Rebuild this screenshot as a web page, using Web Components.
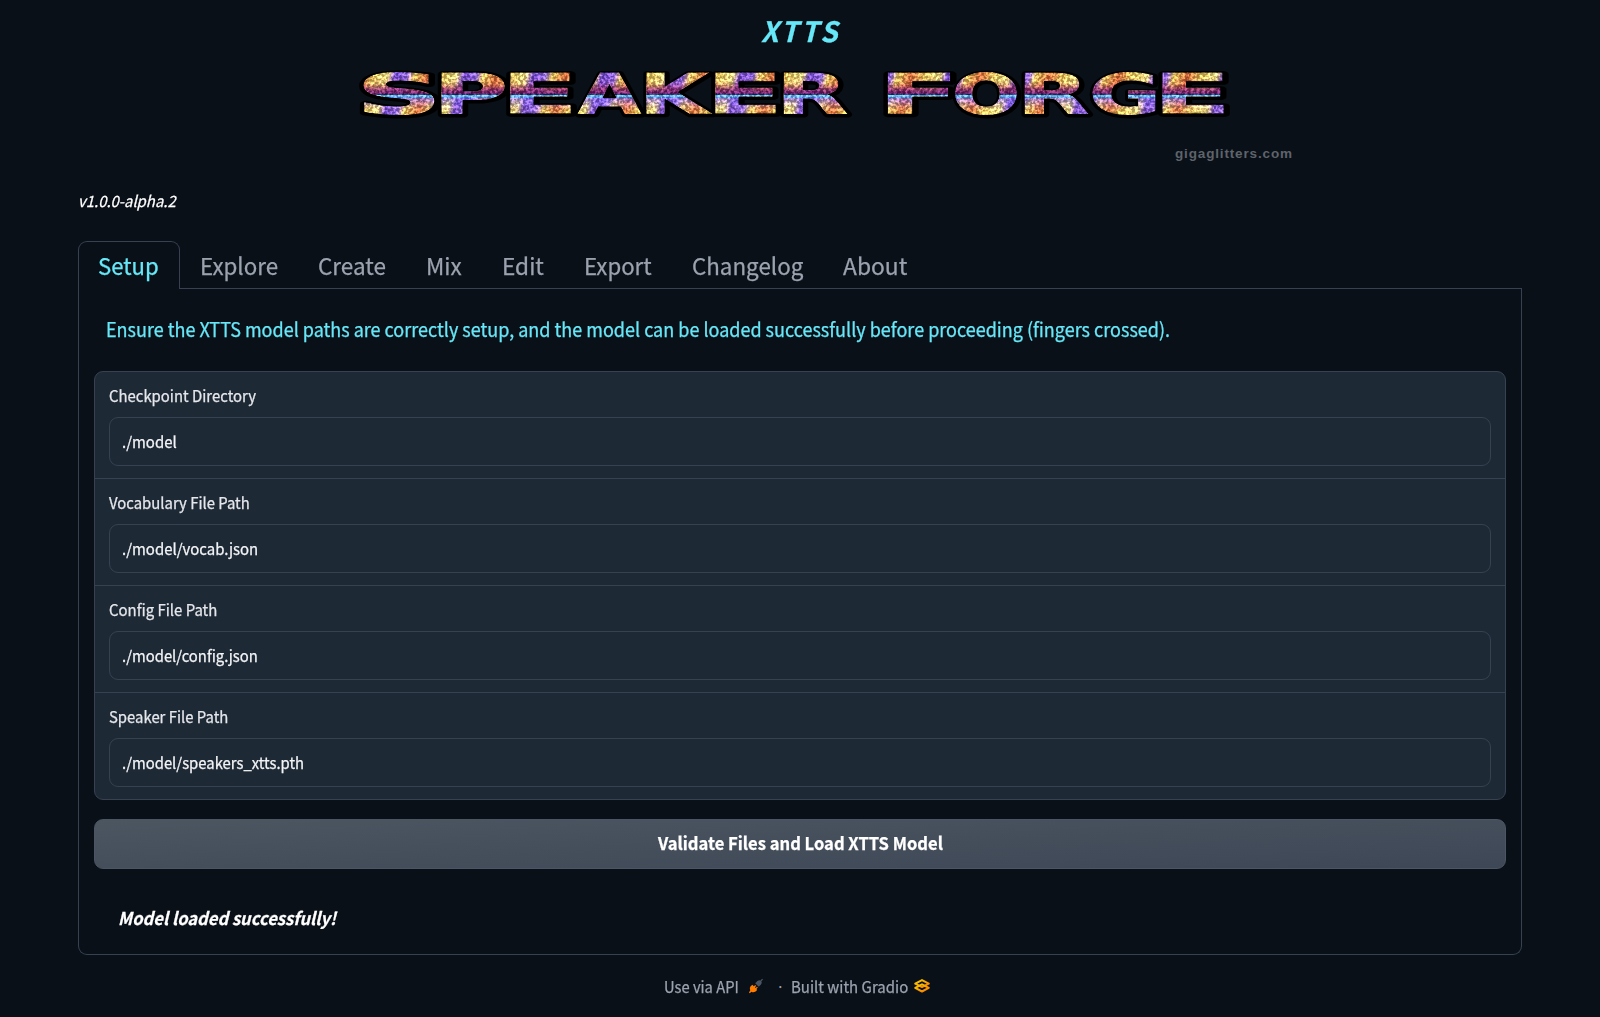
<!DOCTYPE html>
<html lang="en">
<head>
<meta charset="utf-8">
<title>XTTS Speaker Forge</title>
<style>
html,body{margin:0;background:#091018}
body{width:1600px;height:1017px;overflow:hidden;font-family:"Noto Sans CJK JP","Noto Sans CJK SC",sans-serif;color:#f3f4f6}
</style>
</head>
<body>
<forge-app></forge-app>
<script>
const define=(name,html,setup)=>customElements.define(name,class extends HTMLElement{
  constructor(){super();this.attachShadow({mode:'open'}).innerHTML=html;}
  connectedCallback(){if(setup)setup(this,this.shadowRoot);}
});

/* Text line stretched to an exact width so metrics stay independent of the fallback font. */
define('fit-text',`<style>
:host{display:block;white-space:nowrap}
span{display:inline-block;transform-origin:0 50%;-webkit-text-stroke:.25px currentColor}
</style><span><slot></slot></span>`,(el,root)=>{
  const s=root.querySelector('span'),w=+el.getAttribute('w');
  el.style.width=w+'px';
  requestAnimationFrame(()=>{s.style.transform='scaleX('+(w/s.offsetWidth)+')';});
  s.style.transform='scaleX('+(w/s.offsetWidth)+')';
});

define('glitter-banner',`<style>
:host{display:block;width:1000px;height:116px}
svg{display:block}
.word{font:bold 55px "DejaVu Sans","Liberation Sans",sans-serif}
.mark{font:bold 13.5px "Liberation Sans",sans-serif;fill:#5f636b}
</style>
<svg width="1000" height="116" viewBox="300 60 1000 116">
<defs>
<linearGradient id="w" gradientUnits="userSpaceOnUse" x1="360" y1="72" x2="424" y2="90" spreadMethod="repeat">
<stop offset="0" stop-color="#d9642c"/><stop offset=".2" stop-color="#f0cc56"/><stop offset=".42" stop-color="#f5e27d"/><stop offset=".52" stop-color="#6a3fd0"/><stop offset=".7" stop-color="#8a62e8"/><stop offset=".8" stop-color="#f0cc56"/><stop offset="1" stop-color="#d9642c"/></linearGradient>
<linearGradient id="h" gradientUnits="userSpaceOnUse" x1="0" y1="72" x2="0" y2="114">
<stop offset="0" stop-color="#6a2060" stop-opacity="0"/><stop offset=".26" stop-color="#9a2a40" stop-opacity=".15"/><stop offset=".42" stop-color="#7c1c5e" stop-opacity=".9"/><stop offset=".54" stop-color="#4a0a5e"/><stop offset=".55" stop-color="#30d8ea"/><stop offset=".6" stop-color="#40b0f0"/><stop offset=".61" stop-color="#7459e4" stop-opacity=".8"/><stop offset=".78" stop-color="#8060e8" stop-opacity=".3"/><stop offset="1" stop-color="#e98a30" stop-opacity="0"/></linearGradient>
<filter id="g" filterUnits="userSpaceOnUse" x="340" y="60" width="910" height="70" color-interpolation-filters="sRGB">
<feTurbulence type="fractalNoise" baseFrequency=".34" numOctaves="2" seed="8"/>
<feColorMatrix values="3.4 0 0 0 -1.3  3 .4 0 0 -1.3  3 0 .4 0 -1.3  0 0 0 0 1" result="n"/>
<feComposite in="SourceGraphic" in2="n" operator="arithmetic" k1=".4" k2=".76" k3=".2" k4="0"/>
<feComposite in2="SourceAlpha" operator="in"/>
</filter>
</defs>
<g class="word">
<text id="shadow" fill="#000" stroke="#000" stroke-width="6" stroke-linejoin="round" aria-hidden="true" transform="translate(1 1)"></text>
<g filter="url(#g)" stroke-width="1"><text id="base" fill="url(#w)" stroke="url(#w)"></text><text id="tone" fill="url(#h)" stroke="url(#h)" aria-hidden="true"></text></g>
</g>
<text class="mark" x="1175" y="158" textLength="117">gigaglitters.com</text>
</svg>`,(el,root)=>{
  const L=[['S',356,86],['P',433,75],['E',501,77],['A',578,63],['K',639,69],['E',706,77],['R',776,72],['F',878,81],['O',952,68],['R',1017,72],['G',1089,72],['E',1153,78]];
  for(const id of ['shadow','base','tone']){
    const t=root.getElementById(id);
    for(const [c,x,w] of L){
      const s=document.createElementNS('http://www.w3.org/2000/svg','tspan');
      s.textContent=c;s.setAttribute('x',x);s.setAttribute('y',113);
      s.setAttribute('textLength',w);s.setAttribute('lengthAdjust','spacingAndGlyphs');
      t.append(s);
    }
  }
});

define('forge-header',`<style>
:host{display:flex;flex-direction:column;align-items:center;height:241px}
.top{height:60px;color:#67e8f9;font-weight:700;font-style:italic;font-size:28px;letter-spacing:3px;line-height:60px}
.ver{align-self:stretch;padding:11px 0 0 78px;font-size:15.5px;font-style:italic;line-height:26px;color:#fff}
</style>
<div class="top"><fit-text w="79">XTTS</fit-text></div>
<glitter-banner></glitter-banner>
<div class="ver"><fit-text w="98">v1.0.0-alpha.2</fit-text></div>`);

define('tab-item',`<style>
:host{display:flex;box-sizing:border-box;height:47px;padding:0 19px;border:1px solid transparent;border-bottom:0;color:#9ca3af;font-size:23.2px;line-height:46px}
:host([selected]){height:48px;border-color:#374151;border-radius:9px 9px 0 0;background:#091018;color:#67e8f9;margin-bottom:-1px;padding-right:20px}
</style><slot></slot>`);

define('tab-bar',`<style>
:host{display:flex;height:47px;border-bottom:1px solid #374151}
</style><slot></slot>`);

define('path-field',`<style>
:host{display:block;box-sizing:border-box;height:107px;padding:12px 14px 0;border-bottom:1px solid #374151}
:host(:last-of-type){border-bottom:0}
.l{font-size:15.5px;line-height:22px;color:#e5e7eb;height:33px}
.i{box-sizing:border-box;height:49px;border:1px solid #374151;border-radius:9px;padding:0 12px;font-size:15.5px;line-height:46px;color:#f3f4f6}
</style><div class="l"><slot name="label"></slot></div><div class="i"><slot></slot></div>`);

define('field-group',`<style>
:host{display:block;box-sizing:border-box;height:429px;background:#1e2936;border:1px solid #374151;border-radius:9px;overflow:hidden}
</style><slot></slot>`);

define('load-button',`<style>
:host{display:flex;justify-content:center;box-sizing:border-box;height:50px;margin-top:19px;border:1px solid #4b5563;border-radius:9px;background:linear-gradient(178deg,#4b5661,#3e4756);font-weight:700;font-size:17.6px;line-height:46px;color:#fff}
</style><slot></slot>`);

define('app-footer',`<style>
:host{display:flex;align-items:center;height:26px;margin:18px 0 0 664px;font-size:15.5px;line-height:25px;color:#9ca3af}
svg{display:block}
.p{margin:0 12px 0 9px}.d{width:15px}.g{margin-left:6px}
</style>
<fit-text w="75">Use via API</fit-text>
<svg class="p" width="16" height="16" viewBox="0 0 16 16"><path d="M12.8 3L14.6 1.2" stroke="#4b5563" stroke-width="1.2"/><path d="M7.2 5.2L9.4 3Q11.6 1.4 13.1 2.9Q14.6 4.6 12.9 6.6L10.8 8.8Z" fill="#4b5563"/><path d="M2.6 8.3L4.4 6.8L5.8 8.2L7.2 6.9L8.2 7.9L6.9 9.2L7.6 9.9L9 8.7L9.8 9.6L8.4 11L9.2 12L7.6 13.6Q5.3 15 3.4 13.8L1.8 15.2L.9 14.3L2.2 12.7Q1 10.2 2.6 8.3Z" fill="#ff7c00"/></svg>
<span class="d">·</span>
<fit-text w="117">Built with Gradio</fit-text>
<svg class="g" width="16" height="14" viewBox="0 0 17 15"><defs><linearGradient id="o" x2="1" y2="1"><stop stop-color="#f9d100"/><stop offset="1" stop-color="#f97700"/></linearGradient></defs><g fill="none" stroke="url(#o)" stroke-width="2.2" stroke-linejoin="round"><path d="M1.3 5L8.5 1.2L15.7 5L8.5 8.8Z"/><path d="M1.3 9.5L8.5 5.7L15.7 9.5L8.5 13.4Z"/></g></svg>`);

define('forge-app',`<style>
:host{display:block}
main{width:1444px;margin-left:78px}
.panel{box-sizing:border-box;height:666px;border:1px solid #374151;border-top:0;border-radius:0 0 9px 9px;padding:0 15px}
.hint{padding:23px 0 0 12px;height:59px;font-size:19.4px;line-height:34px;color:#67e8f9}
.status{padding:35px 0 0 24px;font-size:17.6px;line-height:28px;font-weight:700;font-style:italic;color:#fff}
</style>
<forge-header></forge-header>
<main>
<tab-bar>
<tab-item selected><fit-text w="61">Setup</fit-text></tab-item>
<tab-item><fit-text w="78">Explore</fit-text></tab-item>
<tab-item><fit-text w="68">Create</fit-text></tab-item>
<tab-item><fit-text w="36">Mix</fit-text></tab-item>
<tab-item><fit-text w="42">Edit</fit-text></tab-item>
<tab-item><fit-text w="68">Export</fit-text></tab-item>
<tab-item><fit-text w="111">Changelog</fit-text></tab-item>
<tab-item><fit-text w="64">About</fit-text></tab-item>
</tab-bar>
<div class="panel">
<div class="hint"><fit-text w="1064">Ensure the XTTS model paths are correctly setup, and the model can be loaded successfully before proceeding (fingers crossed).</fit-text></div>
<field-group>
<path-field><fit-text slot="label" w="147">Checkpoint Directory</fit-text><fit-text w="55">./model</fit-text></path-field>
<path-field><fit-text slot="label" w="141">Vocabulary File Path</fit-text><fit-text w="136">./model/vocab.json</fit-text></path-field>
<path-field><fit-text slot="label" w="108">Config File Path</fit-text><fit-text w="136">./model/config.json</fit-text></path-field>
<path-field><fit-text slot="label" w="119">Speaker File Path</fit-text><fit-text w="182">./model/speakers_xtts.pth</fit-text></path-field>
</field-group>
<load-button><fit-text w="285">Validate Files and Load XTTS Model</fit-text></load-button>
<div class="status"><fit-text w="218">Model loaded successfully!</fit-text></div>
</div>
</main>
<app-footer></app-footer>`);
</script>
</body>
</html>
